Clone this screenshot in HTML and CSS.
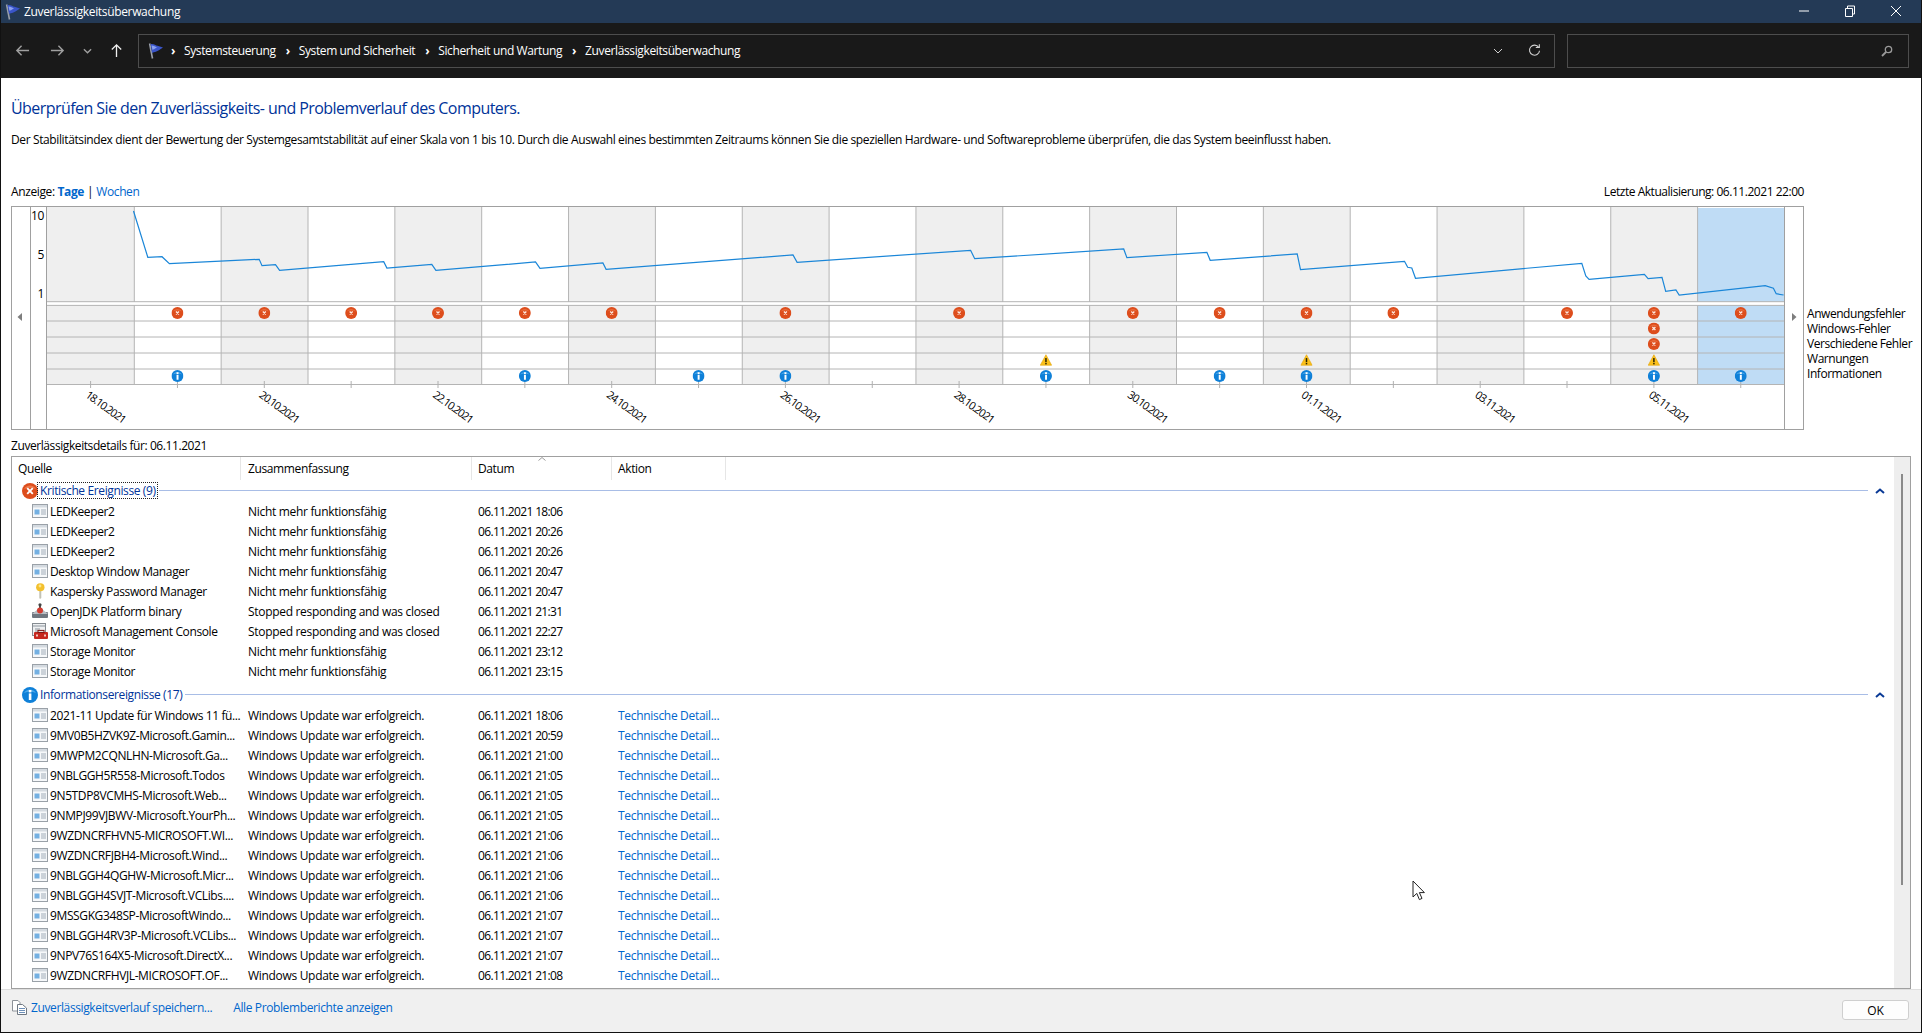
FILE: index.html
```html
<!DOCTYPE html>
<html lang="de">
<head>
<meta charset="utf-8">
<title>Zuverlässigkeitsüberwachung</title>
<link rel="stylesheet" href="styles.css">
</head>
<body>
<svg class="defs" width="0" height="0" aria-hidden="true">
  <defs>
    <symbol id="flag" viewBox="0 0 16 16">
      <path d="M2.6 .5 L5.5 15.5" stroke="#9aa0aa" stroke-width="1.6" fill="none"/>
      <path d="M3.6 1 C7 .5 8.5 2.4 10.5 2.8 L16 4.6 C13 6.4 10 9 6 9.6 L5 9.9 Z" fill="#3a55c8"/>
      <path d="M4.6 2.6 C7 2.6 8 3.8 10 4.2 L7 6.2 L5.4 6.8 Z" fill="#8aa0f0"/>
    </symbol>
    <symbol id="err" viewBox="0 0 16 16">
      <circle cx="8" cy="8" r="8" fill="#dd4d1c"/>
      <path d="M2 6 A7 7 0 0 1 14 6 A12 9 0 0 0 2 6Z" fill="#ec7a4c"/>
      <path d="M5.2 5.2 L10.8 10.8 M10.8 5.2 L5.2 10.8" stroke="#fff" stroke-width="1.9"/>
    </symbol>
    <symbol id="err-s" viewBox="0 0 16 16">
      <circle cx="8" cy="8" r="8" fill="#dd4d1c"/>
      <path d="M2 6 A7 7 0 0 1 14 6 A12 9 0 0 0 2 6Z" fill="#e96c3c"/>
      <path d="M6 6 L10 10 M10 6 L6 10" stroke="#fde8de" stroke-width="1.7"/>
    </symbol>
    <symbol id="info" viewBox="0 0 16 16">
      <circle cx="8" cy="8" r="8" fill="#0f80d8"/>
      <path d="M2 6 A7 7 0 0 1 14 6 A12 9 0 0 0 2 6Z" fill="#4aa7ea"/>
      <rect x="6.8" y="6.4" width="2.6" height="6.6" fill="#fff"/>
      <rect x="6.8" y="3" width="2.6" height="2.4" fill="#fff"/>
    </symbol>
    <symbol id="warn" viewBox="0 0 16 16">
      <path d="M8 1 L15.6 15 H.4 Z" fill="#fbc01a" stroke="#e2a40a" stroke-width=".8"/>
      <rect x="7" y="5.4" width="2" height="5.4" fill="#2b2300"/>
      <rect x="7" y="11.8" width="2" height="2" fill="#2b2300"/>
    </symbol>
    <symbol id="app" viewBox="0 0 16 16">
      <rect x=".5" y="1.5" width="15" height="13" fill="#f6f8fa" stroke="#9aa1a8"/>
      <rect x="1" y="2" width="14" height="2.5" fill="#d4dae0"/>
      <rect x="2.5" y="6.5" width="5" height="5" fill="#74b0e2"/>
      <path d="M9 7 H14 M9 9 H14 M9 11 H14" stroke="#a0acb8"/>
    </symbol>
    <symbol id="key" viewBox="0 0 16 16">
      <path d="M7.3 7 H9.3 V15 L8 16 L7.3 15Z" fill="#c2c2b4"/>
      <ellipse cx="8.3" cy="4.2" rx="4.2" ry="4" fill="#f3c02e"/>
      <circle cx="8" cy="3" r="1.4" fill="#fbe58c"/>
    </symbol>
    <symbol id="jdk" viewBox="0 0 16 16">
      <rect x="0" y="9" width="16" height="6" rx="1" fill="#6f7780"/>
      <path d="M0 11 L6 6 H10 L16 11Z" fill="#b9bec4"/>
      <path d="M7 1 H9 V8 H7Z" fill="#555"/>
      <circle cx="8" cy="7.5" r="3" fill="#d43c30"/>
      <circle cx="8" cy="1.8" r="1.6" fill="#444"/>
    </symbol>
    <symbol id="mmc" viewBox="0 0 16 16">
      <rect x=".5" y=".5" width="13" height="12" fill="#eef0f2" stroke="#868c92"/>
      <path d="M1 3 H13 M3 6 H8 M3 8 H6" stroke="#8c949c"/>
      <rect x="2" y="9" width="14" height="7" rx="1" fill="#c6281f"/>
      <rect x="6" y="7.4" width="6" height="2" fill="none" stroke="#7c1410"/>
      <rect x="4" y="11.5" width="2" height="2" fill="#f2c8c0"/>
      <rect x="12" y="11.5" width="2" height="2" fill="#f2c8c0"/>
    </symbol>
    <symbol id="doc" viewBox="0 0 15 15">
      <path d="M.5 .5 H6 L8 2.5 V11 H.5Z" fill="#fff" stroke="#8d9299"/>
      <path d="M5.5 4.5 H10.5 L14.5 8 V14.5 H5.5Z" fill="#fff" stroke="#6f7882"/>
      <path d="M7 8.5 H13 M7 10.5 H13 M7 12.5 H13" stroke="#6d8fb8"/>
    </symbol>
    <symbol id="chev" viewBox="0 0 10 6">
      <path d="M1 5 L5 1.6 L9 5" fill="none" stroke="#0a3a96" stroke-width="2"/>
    </symbol>
  </defs>
</svg>

<div class="window">
  <header class="titlebar">
    <svg class="ti-flag"><use href="#flag"/></svg>
    <span class="ti-text">Zuverlässigkeitsüberwachung</span>
    <div class="winbtns">
      <svg class="wb" viewBox="0 0 12 12"><path d="M1 6 H11" stroke="#fff"/></svg>
      <svg class="wb" viewBox="0 0 12 12"><path d="M1.5 3.5 H8.5 V11.5 H1.5Z M3.5 3.5 V1 H10.5 V9 H8.5" fill="none" stroke="#fff"/></svg>
      <svg class="wb" viewBox="0 0 12 12"><path d="M1 1 L11 11 M11 1 L1 11" stroke="#fff"/></svg>
    </div>
  </header>

  <nav class="toolbar">
    <div class="navbtns">
      <svg class="nb" viewBox="0 0 16 16"><path d="M15 8 H2 M7 3 L2 8 L7 13" fill="none" stroke="#a0a0a0" stroke-width="1.5"/></svg>
      <svg class="nb" viewBox="0 0 16 16"><path d="M1 8 H14 M9 3 L14 8 L9 13" fill="none" stroke="#a0a0a0" stroke-width="1.5"/></svg>
      <svg class="nb-small" viewBox="0 0 10 8"><path d="M1 2 L5 6 L9 2" fill="none" stroke="#a0a0a0" stroke-width="1.5"/></svg>
      <svg class="nb" viewBox="0 0 16 16"><path d="M8 15 V2 M3 7 L8 2 L13 7" fill="none" stroke="#f0f0f0" stroke-width="1.4"/></svg>
    </div>
    <div class="address">
      <svg class="ad-flag"><use href="#flag"/></svg>
      <span class="sep">›</span>
      <span class="crumb">Systemsteuerung</span>
      <span class="sep">›</span>
      <span class="crumb">System und Sicherheit</span>
      <span class="sep">›</span>
      <span class="crumb">Sicherheit und Wartung</span>
      <span class="sep">›</span>
      <span class="crumb">Zuverlässigkeitsüberwachung</span>
      <svg class="ad-down" viewBox="0 0 10 8"><path d="M1 2 L5 6 L9 2" fill="none" stroke="#cfcfcf"/></svg>
      <svg class="ad-refresh" viewBox="0 0 14 14"><path d="M11.5 3.6 A5.4 5.4 0 1 0 12.4 7.2" fill="none" stroke="#cfcfcf" stroke-width="1.2"/><path d="M8.4 3.8 H12.2 V0.4" fill="none" stroke="#cfcfcf" stroke-width="1.2"/></svg>
    </div>
    <div class="search">
      <svg class="se-icon" viewBox="0 0 12 12"><circle cx="7.5" cy="4.5" r="3.2" fill="none" stroke="#9a9a9a" stroke-width="1.3"/><path d="M5 7 L1 11" stroke="#9a9a9a" stroke-width="1.8"/></svg>
    </div>
  </nav>

  <main class="content">
    <h1 class="heading">Überprüfen Sie den Zuverlässigkeits- und Problemverlauf des Computers.</h1>
    <p class="intro">Der Stabilitätsindex dient der Bewertung der Systemgesamtstabilität auf einer Skala von 1 bis 10. Durch die Auswahl eines bestimmten Zeitraums können Sie die speziellen Hardware- und Softwareprobleme überprüfen, die das System beeinflusst haben.</p>
    <div class="viewrow">
      <span>Anzeige: <a class="lnk strong">Tage</a><span class="pipe">|</span><a class="lnk">Wochen</a></span>
      <span class="updated">Letzte Aktualisierung: 06.11.2021 22:00</span>
    </div>

    <svg class="chart" width="1920" height="226" viewBox="1 206 1920 226">
      <g class="c-gray">
        <rect x="47" y="206" width="87.3" height="178"/>
        <rect x="221.15" y="206" width="86.85" height="178"/>
        <rect x="394.85" y="206" width="86.85" height="178"/>
        <rect x="568.55" y="206" width="86.85" height="178"/>
        <rect x="742.25" y="206" width="86.85" height="178"/>
        <rect x="915.95" y="206" width="86.85" height="178"/>
        <rect x="1089.65" y="206" width="86.85" height="178"/>
        <rect x="1263.35" y="206" width="86.85" height="178"/>
        <rect x="1437.05" y="206" width="86.85" height="178"/>
        <rect x="1610.75" y="206" width="86.85" height="178"/>
      </g>
      <rect class="c-sel" x="1697.6" y="208" width="86.85" height="176"/>
      <rect class="c-white" x="47" y="302" width="1737" height="3"/>

      <path class="c-line" d="M134.3 206V302 M221.15 206V302 M308 206V302 M394.85 206V302 M481.7 206V302 M568.55 206V302 M655.4 206V302 M742.25 206V302 M829.1 206V302 M915.95 206V302 M1002.8 206V302 M1089.65 206V302 M1176.5 206V302 M1263.35 206V302 M1350.2 206V302 M1437.05 206V302 M1523.9 206V302 M1610.75 206V302 M1697.6 206V302"/>
      <path class="c-line" d="M134.3 305V384 M221.15 305V384 M308 305V384 M394.85 305V384 M481.7 305V384 M568.55 305V384 M655.4 305V384 M742.25 305V384 M829.1 305V384 M915.95 305V384 M1002.8 305V384 M1089.65 305V384 M1176.5 305V384 M1263.35 305V384 M1350.2 305V384 M1437.05 305V384 M1523.9 305V384 M1610.75 305V384 M1697.6 305V384"/>
      <path class="c-line" d="M47 301.7H1784.5 M47 305.4H1784.5 M47 321H1784.5 M47 337H1784.5 M47 353H1784.5 M47 369H1784.5 M47 384.5H1784.5"/>
      <path class="c-tick" d="M90.6 381V388 M177.45 381V388 M264.3 381V388 M351.15 381V388 M438 381V388 M524.85 381V388 M611.7 381V388 M698.55 381V388 M785.4 381V388 M872.25 381V388 M959.1 381V388 M1045.95 381V388 M1132.8 381V388 M1219.65 381V388 M1306.5 381V388 M1393.35 381V388 M1480.2 381V388 M1567 381V388 M1653.9 381V388 M1740.75 381V388"/>
      <rect class="c-frame" x="11.5" y="206.5" width="1792" height="223"/>
      <path class="c-frame" d="M30.5 206V430 M46.5 206V430 M1784.5 206V430"/>

      <polyline class="c-trend" points="133.5,211 147.8,257.3 162,256.7 169.4,263.7 259.2,259.3 262,265.7 275.5,264.7 279.6,270.3 383.7,261.7 386.9,268 431.8,264.3 435.9,270.3 535.5,262 540,268.3 602.9,263 606.1,269.3 793,255 797.1,262.3 970.6,250.3 974.7,258.7 1123.7,249 1126.9,257.7 1206.9,252.3 1210.2,260.3 1297.2,254 1300.5,269.7 1404.5,261.3 1407.7,267.3 1411.8,268 1415.5,278.3 1581.8,263.3 1585.8,276 1589.1,279.3 1644.4,274.3 1648.1,278.7 1662,277.3 1665.7,291.3 1675.9,290 1679.2,295 1765.2,285.7 1773.4,288.3 1776.2,293.7 1783.6,295"/>

      <g class="c-ylabel">
        <text x="44" y="220">10</text>
        <text x="44" y="259">5</text>
        <text x="44" y="298">1</text>
      </g>

      <path class="c-arrow" d="M22 313 V321 L17.5 317Z"/>
      <path class="c-arrow" d="M1792 313 V321 L1796.5 317Z"/>

      <g>
        <use href="#err-s" x="171.45" y="307" width="12" height="12"/>
        <use href="#err-s" x="258.3" y="307" width="12" height="12"/>
        <use href="#err-s" x="345.15" y="307" width="12" height="12"/>
        <use href="#err-s" x="432" y="307" width="12" height="12"/>
        <use href="#err-s" x="518.85" y="307" width="12" height="12"/>
        <use href="#err-s" x="605.7" y="307" width="12" height="12"/>
        <use href="#err-s" x="779.4" y="307" width="12" height="12"/>
        <use href="#err-s" x="953.1" y="307" width="12" height="12"/>
        <use href="#err-s" x="1126.8" y="307" width="12" height="12"/>
        <use href="#err-s" x="1213.65" y="307" width="12" height="12"/>
        <use href="#err-s" x="1300.5" y="307" width="12" height="12"/>
        <use href="#err-s" x="1387.35" y="307" width="12" height="12"/>
        <use href="#err-s" x="1561" y="307" width="12" height="12"/>
        <use href="#err-s" x="1647.9" y="307" width="12" height="12"/>
        <use href="#err-s" x="1734.75" y="307" width="12" height="12"/>
        <use href="#err-s" x="1647.9" y="322.5" width="12" height="12"/>
        <use href="#err-s" x="1647.9" y="338" width="12" height="12"/>
        <use href="#warn" x="1039.95" y="354" width="12" height="12"/>
        <use href="#warn" x="1300.5" y="354" width="12" height="12"/>
        <use href="#warn" x="1647.9" y="354" width="12" height="12"/>
        <use href="#info" x="171.45" y="370" width="12" height="12"/>
        <use href="#info" x="518.85" y="370" width="12" height="12"/>
        <use href="#info" x="692.55" y="370" width="12" height="12"/>
        <use href="#info" x="779.4" y="370" width="12" height="12"/>
        <use href="#info" x="1039.95" y="370" width="12" height="12"/>
        <use href="#info" x="1213.65" y="370" width="12" height="12"/>
        <use href="#info" x="1300.5" y="370" width="12" height="12"/>
        <use href="#info" x="1647.9" y="370" width="12" height="12"/>
        <use href="#info" x="1734.75" y="370" width="12" height="12"/>
      </g>

      <g class="c-date">
        <text transform="translate(103.3 410) rotate(36)">18.10.2021</text>
        <text transform="translate(277 410) rotate(36)">20.10.2021</text>
        <text transform="translate(450.7 410) rotate(36)">22.10.2021</text>
        <text transform="translate(624.4 410) rotate(36)">24.10.2021</text>
        <text transform="translate(798.1 410) rotate(36)">26.10.2021</text>
        <text transform="translate(971.8 410) rotate(36)">28.10.2021</text>
        <text transform="translate(1145.5 410) rotate(36)">30.10.2021</text>
        <text transform="translate(1319.2 410) rotate(36)">01.11.2021</text>
        <text transform="translate(1492.9 410) rotate(36)">03.11.2021</text>
        <text transform="translate(1666.6 410) rotate(36)">05.11.2021</text>
      </g>

      <g class="c-legend">
        <text x="1807" y="318">Anwendungsfehler</text>
        <text x="1807" y="333">Windows-Fehler</text>
        <text x="1807" y="348">Verschiedene Fehler</text>
        <text x="1807" y="363">Warnungen</text>
        <text x="1807" y="378">Informationen</text>
      </g>
    </svg>

    <div class="details-label">Zuverlässigkeitsdetails für: 06.11.2021</div>

    <section class="list">
      <div class="table">
        <div class="thead">
          <div class="th">Quelle</div>
          <div class="th">Zusammenfassung</div>
          <div class="th">Datum</div>
          <div class="th">Aktion</div>
          <svg class="sort" viewBox="0 0 8 4"><path d="M.5 3.5 L4 .5 L7.5 3.5" fill="none" stroke="#9a9a9a"/></svg>
        </div>

        <div class="group">
          <svg class="g-icon"><use href="#err"/></svg>
          <a class="g-label focus">Kritische Ereignisse (9)</a>
          <span class="g-line"></span>
          <svg class="g-chev"><use href="#chev"/></svg>
        </div>
        <div class="row"><div class="src"><svg class="ico"><use href="#app"/></svg>LEDKeeper2</div><div class="cell">Nicht mehr funktionsfähig</div><div class="cell date">06.11.2021 18:06</div></div>
        <div class="row"><div class="src"><svg class="ico"><use href="#app"/></svg>LEDKeeper2</div><div class="cell">Nicht mehr funktionsfähig</div><div class="cell date">06.11.2021 20:26</div></div>
        <div class="row"><div class="src"><svg class="ico"><use href="#app"/></svg>LEDKeeper2</div><div class="cell">Nicht mehr funktionsfähig</div><div class="cell date">06.11.2021 20:26</div></div>
        <div class="row"><div class="src"><svg class="ico"><use href="#app"/></svg>Desktop Window Manager</div><div class="cell">Nicht mehr funktionsfähig</div><div class="cell date">06.11.2021 20:47</div></div>
        <div class="row"><div class="src"><svg class="ico"><use href="#key"/></svg>Kaspersky Password Manager</div><div class="cell">Nicht mehr funktionsfähig</div><div class="cell date">06.11.2021 20:47</div></div>
        <div class="row"><div class="src"><svg class="ico"><use href="#jdk"/></svg>OpenJDK Platform binary</div><div class="cell">Stopped responding and was closed</div><div class="cell date">06.11.2021 21:31</div></div>
        <div class="row"><div class="src"><svg class="ico"><use href="#mmc"/></svg>Microsoft Management Console</div><div class="cell">Stopped responding and was closed</div><div class="cell date">06.11.2021 22:27</div></div>
        <div class="row"><div class="src"><svg class="ico"><use href="#app"/></svg>Storage Monitor</div><div class="cell">Nicht mehr funktionsfähig</div><div class="cell date">06.11.2021 23:12</div></div>
        <div class="row"><div class="src"><svg class="ico"><use href="#app"/></svg>Storage Monitor</div><div class="cell">Nicht mehr funktionsfähig</div><div class="cell date">06.11.2021 23:15</div></div>

        <div class="group group-next">
          <svg class="g-icon"><use href="#info"/></svg>
          <a class="g-label">Informationsereignisse (17)</a>
          <span class="g-line"></span>
          <svg class="g-chev"><use href="#chev"/></svg>
        </div>
        <div class="row"><div class="src"><svg class="ico"><use href="#app"/></svg>2021-11 Update für Windows 11 fü...</div><div class="cell">Windows Update war erfolgreich.</div><div class="cell date">06.11.2021 18:06</div><a class="cell lnk">Technische Detail...</a></div>
        <div class="row"><div class="src"><svg class="ico"><use href="#app"/></svg>9MV0B5HZVK9Z-Microsoft.Gamin...</div><div class="cell">Windows Update war erfolgreich.</div><div class="cell date">06.11.2021 20:59</div><a class="cell lnk">Technische Detail...</a></div>
        <div class="row"><div class="src"><svg class="ico"><use href="#app"/></svg>9MWPM2CQNLHN-Microsoft.Ga...</div><div class="cell">Windows Update war erfolgreich.</div><div class="cell date">06.11.2021 21:00</div><a class="cell lnk">Technische Detail...</a></div>
        <div class="row"><div class="src"><svg class="ico"><use href="#app"/></svg>9NBLGGH5R558-Microsoft.Todos</div><div class="cell">Windows Update war erfolgreich.</div><div class="cell date">06.11.2021 21:05</div><a class="cell lnk">Technische Detail...</a></div>
        <div class="row"><div class="src"><svg class="ico"><use href="#app"/></svg>9N5TDP8VCMHS-Microsoft.Web...</div><div class="cell">Windows Update war erfolgreich.</div><div class="cell date">06.11.2021 21:05</div><a class="cell lnk">Technische Detail...</a></div>
        <div class="row"><div class="src"><svg class="ico"><use href="#app"/></svg>9NMPJ99VJBWV-Microsoft.YourPh...</div><div class="cell">Windows Update war erfolgreich.</div><div class="cell date">06.11.2021 21:05</div><a class="cell lnk">Technische Detail...</a></div>
        <div class="row"><div class="src"><svg class="ico"><use href="#app"/></svg>9WZDNCRFHVN5-MICROSOFT.WI...</div><div class="cell">Windows Update war erfolgreich.</div><div class="cell date">06.11.2021 21:06</div><a class="cell lnk">Technische Detail...</a></div>
        <div class="row"><div class="src"><svg class="ico"><use href="#app"/></svg>9WZDNCRFJBH4-Microsoft.Wind...</div><div class="cell">Windows Update war erfolgreich.</div><div class="cell date">06.11.2021 21:06</div><a class="cell lnk">Technische Detail...</a></div>
        <div class="row"><div class="src"><svg class="ico"><use href="#app"/></svg>9NBLGGH4QGHW-Microsoft.Micr...</div><div class="cell">Windows Update war erfolgreich.</div><div class="cell date">06.11.2021 21:06</div><a class="cell lnk">Technische Detail...</a></div>
        <div class="row"><div class="src"><svg class="ico"><use href="#app"/></svg>9NBLGGH4SVJT-Microsoft.VCLibs....</div><div class="cell">Windows Update war erfolgreich.</div><div class="cell date">06.11.2021 21:06</div><a class="cell lnk">Technische Detail...</a></div>
        <div class="row"><div class="src"><svg class="ico"><use href="#app"/></svg>9MSSGKG348SP-MicrosoftWindo...</div><div class="cell">Windows Update war erfolgreich.</div><div class="cell date">06.11.2021 21:07</div><a class="cell lnk">Technische Detail...</a></div>
        <div class="row"><div class="src"><svg class="ico"><use href="#app"/></svg>9NBLGGH4RV3P-Microsoft.VCLibs...</div><div class="cell">Windows Update war erfolgreich.</div><div class="cell date">06.11.2021 21:07</div><a class="cell lnk">Technische Detail...</a></div>
        <div class="row"><div class="src"><svg class="ico"><use href="#app"/></svg>9NPV76S164X5-Microsoft.DirectX...</div><div class="cell">Windows Update war erfolgreich.</div><div class="cell date">06.11.2021 21:07</div><a class="cell lnk">Technische Detail...</a></div>
        <div class="row"><div class="src"><svg class="ico"><use href="#app"/></svg>9WZDNCRFHVJL-MICROSOFT.OF...</div><div class="cell">Windows Update war erfolgreich.</div><div class="cell date">06.11.2021 21:08</div><a class="cell lnk">Technische Detail...</a></div>
      </div>
      <div class="scroll"><div class="thumb"></div></div>
    </section>
  </main>

  <footer class="footer">
    <svg class="f-icon"><use href="#doc"/></svg>
    <a class="lnk f-link">Zuverlässigkeitsverlauf speichern...</a>
    <a class="lnk f-link">Alle Problemberichte anzeigen</a>
    <button class="ok">OK</button>
  </footer>

  <svg class="cursor" viewBox="0 0 14 22"><path d="M1 1 V17 L4.8 13.4 L7.4 19.6 L10 18.4 L7.4 12.6 H12.4 Z" fill="#fff" stroke="#222" stroke-width="1"/></svg>
</div>
</body>
</html>
```
FILE: styles.css
```css
* { box-sizing: border-box; }
html, body { margin: 0; padding: 0; background: #fff; }
body { font-family: "Open Sans", "Noto Sans", "Liberation Sans", sans-serif; font-size: 12px; letter-spacing: -.38px; color: #000; overflow: hidden; }
.defs { position: absolute; }
.window { position: relative; width: 1922px; height: 1033px; display: flex; flex-direction: column; border: 1px solid #111; border-top: 0; overflow: hidden; }

.titlebar { flex: 0 0 23px; display: flex; align-items: center; background: #243a56; color: #fff; padding-left: 3px; }
.ti-flag { width: 16px; height: 16px; margin-right: 4px; }
.ti-text { font-size: 12px; letter-spacing: -.34px; }
.winbtns { margin-left: auto; display: flex; align-items: center; gap: 34px; padding: 0 19px 2px 0; }
.wb { width: 12px; height: 12px; display: block; }

.toolbar { flex: 0 0 55px; display: flex; align-items: center; background: #191919; color: #fff; }
.navbtns { width: 137px; display: flex; align-items: center; padding-left: 14px; }
.nb { width: 15px; height: 15px; }
.nb-small { width: 9px; height: 8px; }
.navbtns .nb:nth-child(2) { margin-left: 20px; }
.navbtns .nb-small { margin-left: 18px; }
.navbtns .nb:nth-child(4) { margin-left: 17px; }
.address { width: 1417px; height: 34px; border: 1px solid #4d4d4d; display: flex; align-items: center; padding-left: 8px; font-size: 12px; }
.ad-flag { width: 16px; height: 16px; margin-right: 8px; }
.sep { width: 5px; margin-right: 8px; font-size: 12px; font-weight: 700; }
.crumb { margin-right: 10px; }
.ad-down { width: 10px; height: 8px; margin-left: auto; margin-right: 25px; }
.ad-refresh { width: 13px; height: 13px; margin-right: 13px; }
.search { width: 342px; height: 34px; margin-left: 12px; border: 1px solid #4d4d4d; display: flex; align-items: center; justify-content: flex-end; padding-right: 15px; }
.se-icon { width: 12px; height: 12px; }

.content { flex: 1 1 auto; min-height: 0; display: flex; flex-direction: column; padding: 19px 10px 0 10px; }
.heading { margin: 0; font-size: 16px; font-weight: 400; line-height: 22px; color: #003399; letter-spacing: -.56px; }
.intro { margin: 13px 0 0; line-height: 16px; white-space: nowrap; }
.viewrow { margin: 36px 0 0; display: flex; justify-content: space-between; line-height: 16px; width: 1793px; }
.pipe { margin: 0 3px; }
.lnk { color: #0066cc; }
.strong { font-weight: 700; }
.updated { letter-spacing: -.46px; }
.chart { display: block; margin: 6px 0 0 -10px; flex: 0 0 226px; }

.c-gray rect { fill: #efefef; }
.c-sel { fill: #bfdcf5; }
.c-white { fill: #fff; }
.c-line { stroke: #b4b4b4; stroke-width: 1; fill: none; }
.c-tick { stroke: #b0b0b0; stroke-width: 1; fill: none; }
.c-frame { stroke: #a0a0a0; stroke-width: 1; fill: none; }
.c-trend { fill: none; stroke: #1a86d8; stroke-width: 1.2; }
.c-arrow { fill: #7e7e7e; }
.c-ylabel text { font-size: 12px; text-anchor: end; }
.c-date text { font-size: 11px; text-anchor: middle; letter-spacing: -1px; }
.c-legend text { font-size: 12px; letter-spacing: -.45px; }

.details-label { flex: 0 0 16px; margin-top: 6px; line-height: 16px; letter-spacing: -.42px; }
.list { margin-top: 2px; flex: 0 0 533px; border: 1px solid #a0a0a0; display: flex; overflow: hidden; position: relative; }
.table { flex: 1 1 auto; min-width: 0; }
.thead { position: relative; height: 23px; display: grid; grid-template-columns: 229px 231px 140px 114px; align-items: start; }
.th { height: 23px; line-height: 23px; padding-left: 6px; border-right: 1px solid #e6e6e6; }
.th:nth-child(2) { padding-left: 7px; }
.sort { position: absolute; left: 526px; top: 0; width: 8px; height: 4px; }

.group { height: 21px; display: flex; align-items: center; padding: 0 9px 0 10px; }
.group-next { margin-top: 3px; }
.g-icon { width: 16px; height: 16px; flex: none; }
.g-label { color: #003399; padding: 0 1px 0 2px; line-height: 15px; white-space: nowrap; }
.focus { outline: 1px dotted #222; outline-offset: 0; }
.g-line { flex: 1 1 auto; height: 1px; background: #a8bde6; margin: 0 7px 0 2px; }
.g-chev { width: 10px; height: 6px; flex: none; }

.row { height: 20px; display: grid; grid-template-columns: 229px 231px 140px 114px; align-items: center; }
.src { display: flex; align-items: center; padding-left: 20px; white-space: nowrap; overflow: hidden; }
.ico { width: 16px; height: 16px; flex: none; margin-right: 2px; }
.cell { padding-left: 7px; white-space: nowrap; letter-spacing: -.31px; }
.row .cell:nth-child(3), .row .cell:nth-child(4) { padding-left: 6px; }
.row .date { letter-spacing: -.65px; }

.scroll { flex: 0 0 16px; background: #eeeeee; padding: 17px 0 0 7px; }
.thumb { width: 2px; height: 411px; background: #8a8a8a; }

.footer { flex: 0 0 43px; display: flex; align-items: flex-start; background: #f0f0f0; border-top: 1px solid #dedede; padding: 10px 12px 0 11px; }
.f-icon { width: 15px; height: 15px; margin-right: 4px; }
.f-link { line-height: 16px; margin-right: 21px; }
.ok { margin-left: auto; width: 67px; height: 20px; background: #fdfdfd; border: 1px solid #cfcfcf; border-radius: 3px; font: inherit; padding: 0; color: #000; }

.cursor { position: absolute; left: 1411px; top: 880px; width: 14px; height: 22px; }
```
